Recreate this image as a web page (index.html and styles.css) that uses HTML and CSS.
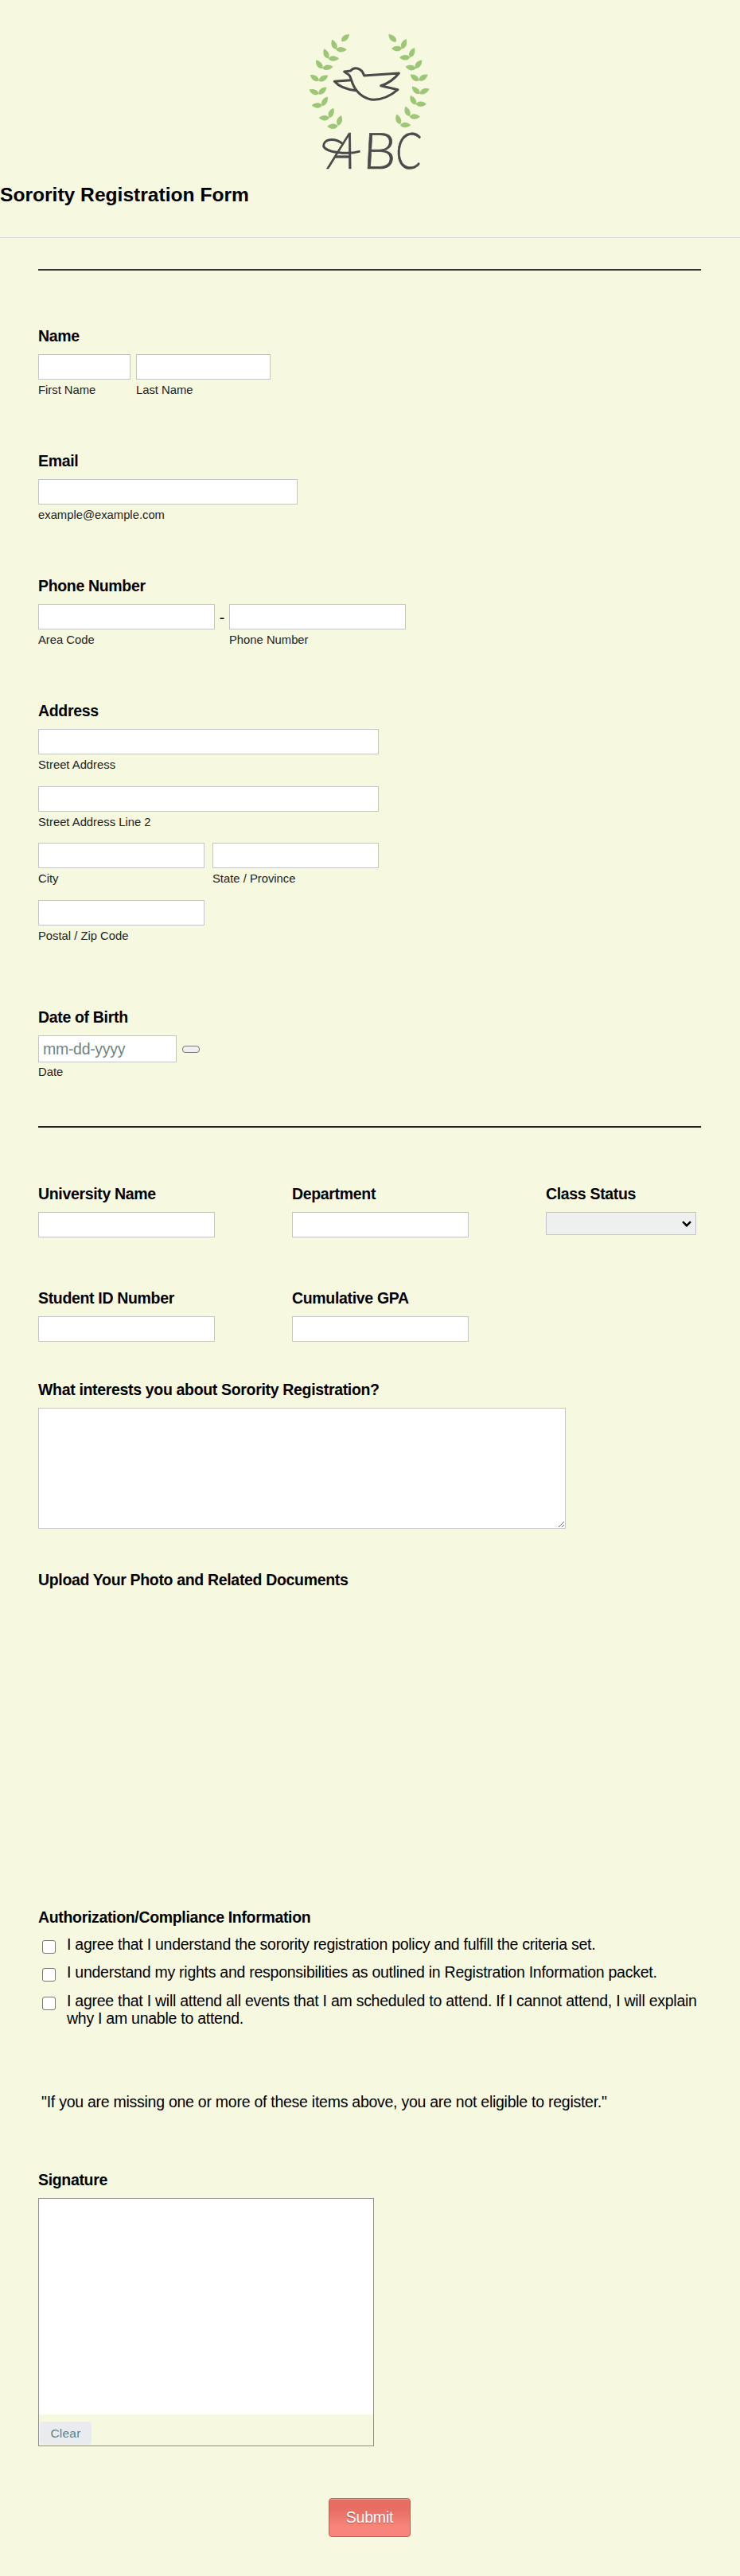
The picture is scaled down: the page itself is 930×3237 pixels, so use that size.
FILE: index.html
```html
<!DOCTYPE html>
<html lang="en">
<head>
  <meta charset="UTF-8">
  <meta name="viewport" content="width=device-width, initial-scale=1.0">
  <title>Sorority Registration Form</title>
  <link rel="stylesheet" href="styles.css">
</head>
<body>

<header class="header">
  <svg class="logo" viewBox="0 0 570 570">
    <defs>
      <path id="leaf" d="M0 0 C8 -14 26 -14 40 0 C26 12 8 12 0 0 Z"/>
    </defs>
    <g fill="#9dc777">
      <!-- left branch -->
      <use href="#leaf" transform="translate(178 66) rotate(-43)"/>
      <use href="#leaf" transform="translate(158 96) rotate(-114)"/>
      <use href="#leaf" transform="translate(157 97) rotate(1)"/>
      <use href="#leaf" transform="translate(128 130) rotate(-114)"/>
      <use href="#leaf" transform="translate(128 131)"/>
      <use href="#leaf" transform="translate(106 168) rotate(-128)"/>
      <use href="#leaf" transform="translate(106 168) rotate(-10)"/>
      <use href="#leaf" transform="translate(93 214) rotate(-147)"/>
      <use href="#leaf" transform="translate(93 216) rotate(-32)"/>
      <use href="#leaf" transform="translate(92 264) rotate(-156)"/>
      <use href="#leaf" transform="translate(92 266) rotate(-43)"/>
      <use href="#leaf" transform="translate(105 307) rotate(180)"/>
      <use href="#leaf" transform="translate(105 309) rotate(-60)"/>
      <use href="#leaf" transform="translate(132 354) rotate(180)"/>
      <use href="#leaf" transform="translate(132 354) rotate(-67)"/>
      <use href="#leaf" transform="translate(164 385) rotate(178)"/>
      <use href="#leaf" transform="translate(165 383) rotate(-73)"/>
      <!-- right branch -->
      <use href="#leaf" transform="translate(384 67) rotate(-136)"/>
      <use href="#leaf" transform="translate(406 92) rotate(179)"/>
      <use href="#leaf" transform="translate(406 94) rotate(-67)"/>
      <use href="#leaf" transform="translate(436 126) rotate(179)"/>
      <use href="#leaf" transform="translate(436 126) rotate(-65)"/>
      <use href="#leaf" transform="translate(458 168) rotate(-169)"/>
      <use href="#leaf" transform="translate(456 168) rotate(-52)"/>
      <use href="#leaf" transform="translate(470 214) rotate(-145)"/>
      <use href="#leaf" transform="translate(470 214) rotate(-35)"/>
      <use href="#leaf" transform="translate(473 263) rotate(-138)"/>
      <use href="#leaf" transform="translate(473 263) rotate(-27)"/>
      <use href="#leaf" transform="translate(458 304) rotate(-121)"/>
      <use href="#leaf" transform="translate(458 303)"/>
      <use href="#leaf" transform="translate(434 348) rotate(-113)"/>
      <use href="#leaf" transform="translate(434 350)"/>
      <use href="#leaf" transform="translate(399 378) rotate(-110)"/>
      <use href="#leaf" transform="translate(399 382)"/>
    </g>
    <g fill="none" stroke="#4a4a4a" stroke-width="9" stroke-linejoin="round" stroke-linecap="round">
      <!-- dove -->
      <path d="M188 180 L212 177 C222 163 252 161 263 195 L394 186 C380 204 356 224 326 233 L390 248 C362 272 334 285 300 286 C268 284 240 265 225 237 C213 214 213 198 205 192 Z"/>
      <path d="M213 212 L151 217 C169 238 196 247 230 251"/>
      <!-- swash behind the initials -->
      <path d="M244 481 C200 494 118 484 110 461 C108 436 148 426 182 452"/>
    </g>
    <g class="logo-text">
      <text transform="translate(119 545) skewX(-17)" textLength="96" lengthAdjust="spacingAndGlyphs">A</text>
      <text transform="translate(256 545) skewX(-3)" textLength="124" lengthAdjust="spacingAndGlyphs">B</text>
      <text transform="translate(378 545) skewX(-3)" textLength="98" lengthAdjust="spacingAndGlyphs">C</text>
    </g>
  </svg>
  <h1>Sorority Registration Form</h1>
</header>

<form class="form">
  <hr>

  <div class="field">
    <label for="first-name">Name</label>
    <div class="row name-row">
      <div class="sub w-first"><input type="text" id="first-name"><span>First Name</span></div>
      <div class="sub w-last"><input type="text" id="last-name"><span>Last Name</span></div>
    </div>
  </div>

  <div class="field">
    <label for="email">Email</label>
    <div class="sub w-email"><input type="email" id="email"><span>example@example.com</span></div>
  </div>

  <div class="field">
    <label for="area">Phone Number</label>
    <div class="row">
      <div class="sub w-text"><input type="text" id="area"><span>Area Code</span></div>
      <span class="dash">-</span>
      <div class="sub w-text"><input type="text" id="phone"><span>Phone Number</span></div>
    </div>
  </div>

  <div class="field">
    <label for="street">Address</label>
    <div class="address">
      <div class="sub full"><input type="text" id="street"><span>Street Address</span></div>
      <div class="sub full"><input type="text" id="street2"><span>Street Address Line 2</span></div>
      <div class="sub"><input type="text" id="city"><span>City</span></div>
      <div class="sub"><input type="text" id="state"><span>State / Province</span></div>
      <div class="sub"><input type="text" id="zip"><span>Postal / Zip Code</span></div>
    </div>
  </div>

  <div class="field birth">
    <label for="dob">Date of Birth</label>
    <div class="row">
      <div class="sub w-date"><input type="text" id="dob" placeholder="mm-dd-yyyy"><span>Date</span></div>
      <button type="button" class="calendar"></button>
    </div>
  </div>

  <hr class="second">

  <div class="columns">
    <div>
      <label for="university">University Name</label>
      <input type="text" id="university" class="w-text">
    </div>
    <div>
      <label for="department">Department</label>
      <input type="text" id="department" class="w-text">
    </div>
    <div>
      <label for="status">Class Status</label>
      <div class="select-wrap">
        <select id="status"><option></option></select>
        <svg class="arrow" viewBox="0 0 12 8"><path d="M1 1.2 L6 6.2 L11 1.2"/></svg>
      </div>
    </div>
    <div>
      <label for="student-id">Student ID Number</label>
      <input type="text" id="student-id" class="w-text">
    </div>
    <div>
      <label for="gpa">Cumulative GPA</label>
      <input type="text" id="gpa" class="w-text">
    </div>
  </div>

  <div class="interests">
    <label for="interests">What interests you about Sorority Registration?</label>
    <textarea id="interests"></textarea>
  </div>

  <div class="upload">
    <label>Upload Your Photo and Related Documents</label>
  </div>

  <div class="agreements">
    <label>Authorization/Compliance Information</label>
    <div class="option"><input type="checkbox" id="a1"><label for="a1">I agree that I understand the sorority registration policy and fulfill the criteria set.</label></div>
    <div class="option"><input type="checkbox" id="a2"><label for="a2">I understand my rights and responsibilities as outlined in Registration Information packet.</label></div>
    <div class="option"><input type="checkbox" id="a3"><label for="a3">I agree that I will attend all events that I am scheduled to attend. If I cannot attend, I will explain why I am unable to attend.</label></div>
  </div>

  <p class="note">"If you are missing one or more of these items above, you are not eligible to register."</p>

  <label>Signature</label>
  <div class="signature">
    <div class="pad"></div>
    <button type="button" class="clear">Clear</button>
  </div>

  <button type="submit" class="submit">Submit</button>
</form>

</body>
</html>
```
FILE: styles.css
```css
* {
  margin: 0;
  padding: 0;
  box-sizing: border-box;
  font-family: "Liberation Sans", Arial, sans-serif;
}

body {
  background-color: #f6f8df;
  color: #000;
  font-size: 19.5px;
}

.header {
  height: 299px;
  padding-top: 30px;
  border-bottom: 1px solid #dddfdf;
}

.logo {
  display: block;
  width: 190px;
  height: 190px;
  margin: 0 auto;
  overflow: visible;
}

.logo-text {
  font-family: Lato, sans-serif;
  font-size: 190px;
  font-weight: 300;
  fill: #4a4a4a;
  stroke: #4a4a4a;
  stroke-width: 2;
}

.logo-text text {
  font-family: inherit;
}

.header h1 {
  margin-top: 11px;
  font-size: 24.6px;
  line-height: 28px;
}

.form {
  padding: 39px 49px 49px 48px;
}

hr {
  height: 2px;
  border: none;
  background-color: #333;
  margin-bottom: 72px;
}

hr.second {
  margin-bottom: 73px;
  background-color: #222;
}

label {
  display: block;
  font-weight: bold;
  line-height: 20px;
  letter-spacing: -0.33px;
  margin-bottom: 13px;
}

input[type="text"],
input[type="email"] {
  display: block;
  width: 100%;
  height: 32px;
  padding: 0 5px;
  border: 1px solid #c4c5c8;
  background-color: #fff;
  font-size: 19.5px;
  letter-spacing: -0.3px;
}

input.w-text,
.w-text {
  width: 222px;
}

.field {
  margin-bottom: 70px;
}

.row {
  display: flex;
}

.name-row {
  gap: 7px;
}

.sub span {
  display: block;
  margin-top: 4px;
  font-size: 14.8px;
  line-height: 18px;
  color: #222;
}

.w-first {
  width: 116px;
}

.w-last {
  width: 169px;
}

.w-email {
  width: 326px;
}

.dash {
  width: 18px;
  line-height: 34px;
  text-align: center;
}

.address {
  display: grid;
  grid-template-columns: 209px 209px;
  column-gap: 10px;
  row-gap: 17.7px;
}

.address .full {
  grid-column: span 2;
}

.field:has(.address) {
  margin-bottom: 83px;
}

.w-date {
  width: 174px;
}

.w-date input[type="text"] {
  height: 34px;
}

.w-date span {
  margin-top: 3px;
}

.w-date input::placeholder {
  color: #71857f;
}

.calendar {
  width: 22px;
  height: 9px;
  margin: 13px 0 0 7px;
  border: 1px solid #777;
  border-radius: 4px;
  background-color: #efefef;
}

.birth {
  margin-bottom: 59px;
}

.columns {
  display: grid;
  grid-template-columns: 319px 319px 189px;
  row-gap: 66px;
  margin-bottom: 50px;
}

.select-wrap {
  position: relative;
}

select {
  display: block;
  width: 189px;
  height: 29px;
  border: 1px solid #c4c5c8;
  border-radius: 0;
  background-color: #eef0ef;
  appearance: none;
}

.arrow {
  position: absolute;
  top: 11px;
  right: 6px;
  width: 12px;
  height: 8px;
  fill: none;
  stroke: #000;
  stroke-width: 2.4;
}

textarea {
  display: block;
  width: 663px;
  height: 152px;
  border: 1px solid #c4c5c8;
  background-color: #fff;
}

.upload {
  height: 424px;
  margin-top: 54px;
}

.agreements {
  height: 231px;
}

.agreements > label {
  margin-bottom: 14px;
}

.option {
  display: flex;
  margin-bottom: 13.4px;
}

.option input {
  flex: none;
  appearance: none;
  width: 17px;
  height: 17px;
  margin: 5px 14px 0 5px;
  border: 1px solid #777;
  border-radius: 3px;
  background-color: #fff;
}

.option label {
  font-weight: normal;
  line-height: 21.7px;
  letter-spacing: -0.26px;
  margin: 0;
}

.note {
  line-height: 22px;
  letter-spacing: -0.26px;
  padding-left: 4px;
  margin-bottom: 77px;
}

.signature {
  width: 422px;
  height: 312px;
  border: 1px solid #8f8f8f;
}

.pad {
  height: 271px;
  background-color: #fff;
}

.clear {
  display: block;
  width: 65px;
  height: 29px;
  margin: 9px 0 0 1px;
  border: none;
  border-radius: 4px;
  background-color: #e9ebef;
  color: #5d7f88;
  font-size: 15.5px;
  letter-spacing: 0.2px;
}

.submit {
  display: block;
  width: 103px;
  height: 49px;
  margin: 65px auto 0;
  border: 1px solid #dd5148;
  border-radius: 4px;
  background: linear-gradient(#e76c62, #e76c62 25%, #f7857c 75%);
  box-shadow: inset 0 1px 0 #f5a69f;
  color: #fff;
  font-size: 19.5px;
  letter-spacing: -0.2px;
  text-shadow: 0 1px 1px rgba(0, 0, 0, 0.3);
}
```
